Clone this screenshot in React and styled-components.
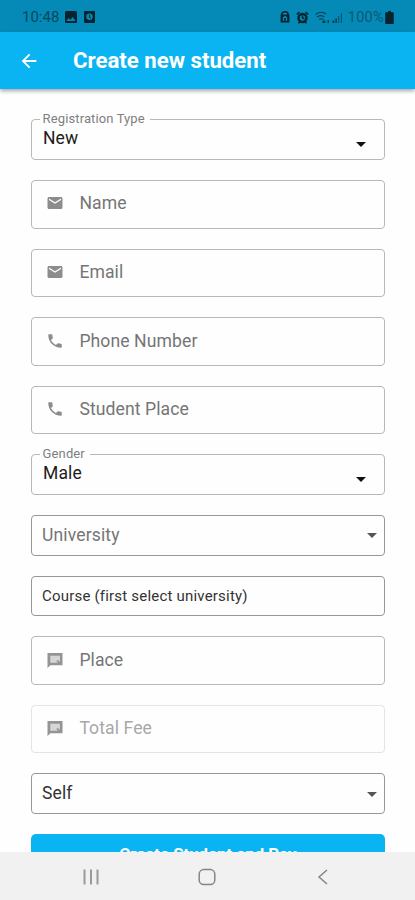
import React from 'react';
import styled, { createGlobalStyle } from 'styled-components';
import { MdArrowBack, MdImage, MdEmail, MdPhone } from 'react-icons/md';

const App = () => {
    return (
        <Screen>
            <GlobalStyle />
            <StatusBar>
                <Clock>10:48</Clock>
                <MdImage size={16} />
                <PhotoBox />
                <Spacer />
                <LockIcon />
                <AlarmIcon />
                <SignalIcon />
                <Battery>100%</Battery>
                <BatteryIcon />
            </StatusBar>
            <AppBar>
                <MdArrowBack size={22} />
                <Title>Create new student</Title>
            </AppBar>
            <Form>
                <LabeledSelect label="Registration Type" value="New" />
                <InputField icon={<MdEmail size={18} />} text="Name" />
                <InputField icon={<MdEmail size={18} />} text="Email" />
                <InputField icon={<MdPhone size={18} />} text="Phone Number" />
                <InputField icon={<MdPhone size={18} />} text="Student Place" />
                <LabeledSelect label="Gender" value="Male" />
                <Select>
                    <Value $color="#757575">University</Value>
                    <Arrow />
                </Select>
                <Select>
                    <CourseText>Course (first select university)</CourseText>
                </Select>
                <InputField icon={<ChatIcon />} text="Place" />
                <InputField icon={<ChatIcon />} text="Total Fee" disabled />
                <Select>
                    <Value>Self</Value>
                    <Arrow />
                </Select>
                <SubmitButton>Create Student and Pay</SubmitButton>
            </Form>
            <NavBar>
                <svg width="18" height="18" viewBox="0 0 18 18" stroke="#9a9a9a" strokeWidth="2">
                    <path d="M2.500 1.500v15M9 1.500v15M15.500 1.500v15" />
                </svg>
                <svg width="18" height="18" viewBox="0 0 18 18" fill="none" stroke="#858585" strokeWidth="1.5">
                    <rect x="1.2" y="1.6" width="15.6" height="15" rx="4.6" />
                </svg>
                <svg width="18" height="18" viewBox="0 0 18 18" fill="none" stroke="#858585" strokeWidth="1.5">
                    <path d="M13 2L5 9l8 7" />
                </svg>
            </NavBar>
        </Screen>
    );
};

export default App;

const LabeledSelect = ({ label, value }) => (
    <Fieldset>
        <Legend>{label}</Legend>
        <FieldsetRow>
            <Value $color="#1c1c1c">{value}</Value>
            <Arrow $dark />
        </FieldsetRow>
    </Fieldset>
);

const InputField = ({ icon, text, disabled }) => (
    <Input $disabled={disabled}>
        {icon}
        <Placeholder $disabled={disabled}>{text}</Placeholder>
    </Input>
);

const Arrow = ({ $dark }) => (
    <ArrowSvg $dark={$dark} viewBox="0 0 10 5">
        <path d="M0 0h10L5 5z" />
    </ArrowSvg>
);

const PhotoBox = () => (
    <StatusSvg $left="5px" width="11" height="12" viewBox="0 0 11 12">
        <path fillRule="evenodd" d="M1 0h9a1 1 0 0 1 1 1v10a1 1 0 0 1-1 1H1a1 1 0 0 1-1-1V1a1 1 0 0 1 1-1zM5.5 2.6a3.2 3.2 0 1 0 0 6.4 3.2 3.2 0 0 0 0-6.4z" />
        <path d="M5 3.8h1v2l1.2.8-.6.8L5 6.3z" />
    </StatusSvg>
);

const LockIcon = () => (
    <StatusSvg width="10" height="12" viewBox="0 0 10 12">
        <path d="M1.800 4.500V3.600a3.200 2.800 0 0 1 6.400 0v.9" fill="none" stroke="currentColor" strokeWidth="1.5" />
        <path fillRule="evenodd" d="M.6 3.600h8.800v8H.6zM5 4.600L2.800 6.600v3.200h4.400V6.600z" />
        <path d="M4.200 7h1.600v2.800H4.200z" />
    </StatusSvg>
);

const AlarmIcon = () => (
    <StatusSvg $left="6px" width="13" height="13" viewBox="0 0 13 13">
        <circle cx="6.5" cy="7" r="4" fill="none" stroke="currentColor" strokeWidth="2.4" />
        <path d="M6.5 4.5V7l2 .8M.8 3.4l2.700-2.200M12.200 3.400L9.500 1.200M2.500 12.300l1.300-1.600M10.500 12.300l-1.300-1.600" fill="none" stroke="currentColor" strokeWidth="1.5" />
    </StatusSvg>
);

const SignalIcon = () => (
    <StatusSvg $left="6px" width="29" height="13" viewBox="0 0 29 13" opacity="0.75">
        <path d="M.5 3.5C4 .8 8 .8 11 3M2 6c2.4-1.8 5-1.8 7.4 0M4 8.4c1.6-1 3-1 4.4.2" fill="none" stroke="currentColor" strokeWidth="1.1" />
        <path d="M7.5 9.5h3v2.5h-3zM12.5 9h1.4v3h-1.4zM17.5 9.5h1.8V12h-1.8zM20.4 7.5h1.5V12h-1.5z" />
        <path d="M23.6 5v7M26.4 2v10" stroke="currentColor" strokeWidth="1.2" opacity="0.65" />
    </StatusSvg>
);

const BatteryIcon = () => (
    <StatusSvg $left="1px" width="9" height="13" viewBox="0 0 9 13">
        <path d="M3 0h3v1.3h1.8c.6 0 1 .4 1 1V12c0 .6-.4 1-1 1H1.2c-.6 0-1-.4-1-1V2.3c0-.6.4-1 1-1H3z" />
    </StatusSvg>
);

const ChatIcon = () => (
    <svg width="18" height="18" viewBox="0 0 18 18">
        <path d="M1.500 2h15v12.300h-12l-3 2.700z" fill="#949494" />
        <path d="M4.300 4.700h9.600v5.800h-2l-.5 1.300H4.300z" fill="#d6d6d6" />
        <path d="M10.500 9.300h2.500v1.500h-2.500z" fill="#9c9c9c" />
    </svg>
);

const GlobalStyle = createGlobalStyle`
  body {
    margin: 0;
    background: #fefefe;
    font-family: Roboto, 'Liberation Sans', sans-serif;
  }
`;

const Screen = styled.div`
  width: 415px;
  height: 900px;
  display: flex;
  flex-direction: column;
  overflow: hidden;
  background: #fefefe;
`;

const StatusBar = styled.div`
  height: 32px;
  flex-shrink: 0;
  display: flex;
  align-items: center;
  box-sizing: border-box;
  padding: 2px 21px 0 22px;
  background: #058ab7;
  color: #06242f;
`;

const Clock = styled.span`
  width: 37px;
  margin-right: 4px;
  font-size: 15px;
  color: #07475d;
`;

const Spacer = styled.div`
  flex: 1;
`;

const Battery = styled.span`
  margin-left: 4px;
  font-size: 14.5px;
  letter-spacing: 0.3px;
  color: #075873;
`;

const StatusSvg = styled.svg`
  flex-shrink: 0;
  margin-left: ${({ $left }) => $left || 0};
  fill: currentColor;
`;

const AppBar = styled.header`
  height: 57px;
  flex-shrink: 0;
  display: flex;
  align-items: center;
  box-sizing: border-box;
  padding-left: 18px;
  background: #0ab4f2;
  color: #fff;
  box-shadow: 0 2px 4px rgba(0, 0, 0, 0.35);
`;

const Title = styled.h1`
  margin: 0 0 2px 33px;
  font-size: 22.2px;
  font-weight: 700;
  line-height: 26px;
`;

const Form = styled.main`
  flex: 1;
  min-height: 0;
  display: flex;
  flex-direction: column;
  gap: 20px;
  padding: 30.4px 30px 0 30.6px;
  overflow: hidden;
`;

const Box = styled.div`
  height: 48.6px;
  flex-shrink: 0;
  display: flex;
  align-items: center;
  box-sizing: border-box;
  border: 1px solid #b8b8b8;
  border-radius: 4px;
`;

const Input = styled(Box)`
  padding: 0 0 1.6px 14.4px;
  border-color: ${({ $disabled }) => ($disabled ? '#e4e4e4' : '#b8b8b8')};
  color: #8c8c8c;
`;

const Placeholder = styled.span`
  margin-left: 15.4px;
  font-size: 17.6px;
  letter-spacing: 0.08px;
  color: ${({ $disabled }) => ($disabled ? '#a8a8a8' : '#757575')};
`;

const Select = styled(Box)`
  height: 40.6px;
  justify-content: space-between;
  padding: 0 7px 1px 10.4px;
  border-color: #979797;
`;

const Value = styled.span`
  font-size: 17.5px;
  letter-spacing: 0.15px;
  color: ${({ $color }) => $color || '#333'};
`;

const CourseText = styled(Value)`
  margin-top: 2px;
  font-size: 15px;
  letter-spacing: 0.2px;
`;

const Fieldset = styled.fieldset`
  height: 47.6px;
  flex-shrink: 0;
  box-sizing: border-box;
  min-width: 0;
  margin: -7px 0 0;
  padding: 0 18px 0 8px;
  border: 1px solid #b8b8b8;
  border-radius: 4px;
`;

const Legend = styled.legend`
  padding: 0 5px 0 3px;
  font-size: 13px;
  line-height: 14px;
  letter-spacing: 0.12px;
  color: #808080;
`;

const FieldsetRow = styled.div`
  display: flex;
  align-items: center;
  justify-content: space-between;
  height: 24px;
  padding-left: 3.4px;
`;

const ArrowSvg = styled.svg`
  width: 10px;
  height: 5px;
  flex-shrink: 0;
  margin-top: ${({ $dark }) => ($dark ? '12px' : '2px')};
  fill: ${({ $dark }) => ($dark ? '#111' : '#555')};
`;

const SubmitButton = styled.button`
  height: 41px;
  flex-shrink: 0;
  padding: 0;
  border: 0;
  border-radius: 5px;
  background: #0ab4f2;
  color: #fff;
  font-family: inherit;
  font-size: 16.8px;
  font-weight: 700;
  line-height: 41px;
`;

const NavBar = styled.nav`
  height: 48px;
  flex-shrink: 0;
  display: flex;
  justify-content: space-between;
  align-items: center;
  box-sizing: border-box;
  padding: 2px 83px 0 82px;
  background: #f1f1f1;
`;
